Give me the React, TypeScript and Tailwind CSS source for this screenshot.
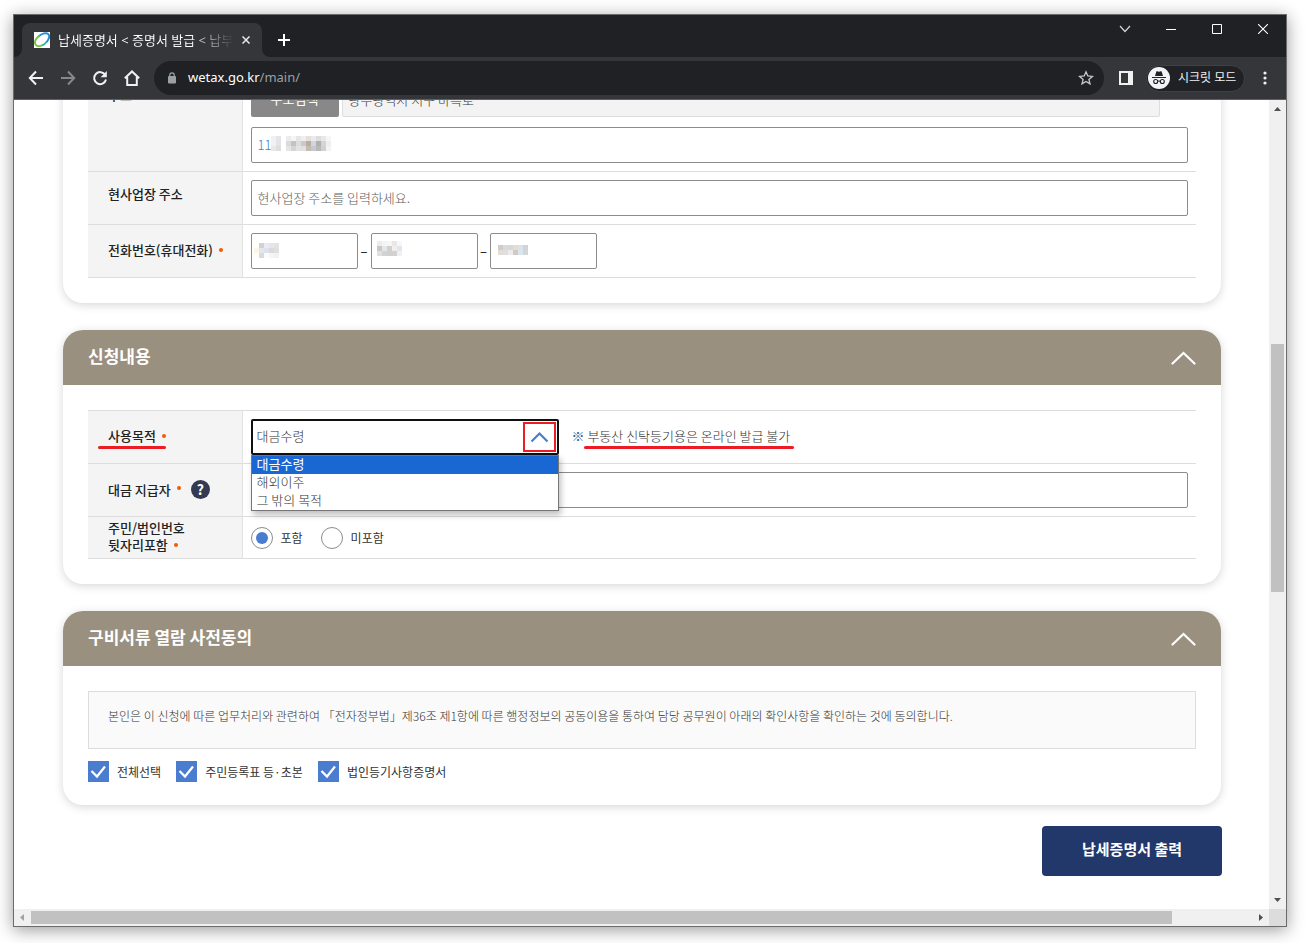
import React from "react";
import type { ReactNode } from "react";

const UI = "font-['Noto_Sans','Noto_Sans_CJK_KR',sans-serif]";

function Mosaic({ cells, className, cols }: { cells: string[]; cols: number; className: string }) {
  const rows = Math.ceil(cells.length / cols);
  return (
    <svg aria-hidden="true" className={className} width={cols * 5} height={rows * 5} shapeRendering="crispEdges">
      {cells.map((c, i) => (
        <rect key={i} x={(i % cols) * 5} y={Math.floor(i / cols) * 5} width="5" height="5" fill={c} />
      ))}
    </svg>
  );
}

function IconButton({ label, children, className = "" }: { label: string; children: ReactNode; className?: string }) {
  return (
    <button type="button" aria-label={label} className={"flex shrink-0 items-center justify-center " + className}>
      {children}
    </button>
  );
}

function TabStrip() {
  return (
    <div className="flex h-[42px] items-end justify-between bg-[#202124] pl-2">
      <div className="flex items-end">
        <div className="relative flex h-[34px] w-[240px] items-center rounded-t-lg bg-[#35363a] pl-3 pr-2">
          <svg className="absolute -left-2 bottom-0" width="8" height="8" aria-hidden="true">
            <path d="M8 0v8H0a8 8 0 0 0 8-8z" fill="#35363a" />
          </svg>
          <svg className="absolute -right-2 bottom-0" width="8" height="8" aria-hidden="true">
            <path d="M0 0v8h8a8 8 0 0 1-8-8z" fill="#35363a" />
          </svg>
          <svg width="16" height="16" viewBox="0 0 16 16" className="shrink-0" fill="none" aria-hidden="true">
            <rect width="16" height="16" fill="#fff" />
            <path d="M4.500 4.500C8 1.200 12.500.4 14.300 2.200c1.600 1.700.6 5.200-2 8.300" stroke="#1f8fd6" strokeWidth="1.900" />
            <path d="M5.500 3.500C2.500 6 .4 9.800 1.300 12.200c.9 2.300 4.200 2.500 7.700.6" stroke="#7cc043" strokeWidth="1.900" />
            <path d="M8.500 13.200c1.600-.8 3-2 4-3.300" stroke="#2fae9b" strokeWidth="1.600" />
          </svg>
          <div className="ml-2 h-5 flex-1 overflow-hidden bg-gradient-to-r from-white from-75% to-transparent bg-clip-text text-[13px] leading-5 whitespace-nowrap text-transparent">
            납세증명서 &lt; 증명서 발급 &lt; 납부
          </div>
          <IconButton label="탭 닫기" className="ml-1 size-4">
            <svg width="8" height="8" viewBox="0 0 8 8" stroke="#e8eaed" strokeWidth="1.500">
              <path d="M.5.5l7 7M7.500.5l-7 7" />
            </svg>
          </IconButton>
        </div>
        <IconButton label="새 탭" className="ml-2 h-[34px] w-7">
          <svg width="12" height="12" viewBox="0 0 12 12" stroke="#fff" strokeWidth="2">
            <path d="M6 0v12M0 6h12" />
          </svg>
        </IconButton>
      </div>
      <div className="flex h-full items-start">
        <IconButton label="탭 검색" className="h-7 w-[46px]">
          <svg width="12" height="8" viewBox="0 0 12 8" fill="none" stroke="#d5d5d6" strokeWidth="1.200">
            <path d="M1 1l5 5.500L11 1" />
          </svg>
        </IconButton>
        <IconButton label="최소화" className="h-7 w-[46px]">
          <svg width="10" height="2"><path d="M0 1.500h10" stroke="#fff" /></svg>
        </IconButton>
        <IconButton label="최대화" className="h-7 w-[46px]">
          <svg width="10" height="10" fill="none" stroke="#fff"><path d="M.5.500h9v9h-9z" /></svg>
        </IconButton>
        <IconButton label="닫기" className="h-7 w-[46px]">
          <svg width="10" height="10" stroke="#fff" strokeWidth="1.100"><path d="M0 0l10 10M10 0L0 10" /></svg>
        </IconButton>
      </div>
    </div>
  );
}

function Toolbar() {
  return (
    <div className="flex h-[43px] items-center border-b border-[#5f6063] bg-[#35363a] pl-3.5 pr-[13px]">
      <div className="flex items-center gap-4">
        <IconButton label="뒤로" className="size-4">
          <svg width="16" height="16" viewBox="0 0 16 16" fill="none" stroke="#f1f1f2" strokeWidth="2">
            <path d="M15 8H2M8 1.500L1.800 8 8 14.500" />
          </svg>
        </IconButton>
        <IconButton label="앞으로" className="size-4">
          <svg width="16" height="16" viewBox="0 0 16 16" fill="none" stroke="#87888b" strokeWidth="2">
            <path d="M1 8h13M8 1.500L14.200 8 8 14.500" />
          </svg>
        </IconButton>
        <IconButton label="새로고침" className="size-4">
          <svg width="16" height="16" viewBox="0 0 16 16" fill="none" stroke="#f1f1f2" strokeWidth="2">
            <path d="M13.300 5A6 6 0 1 0 14 9.500" />
            <path d="M14.800 1v6.200H8.600z" fill="#f1f1f2" stroke="none" />
          </svg>
        </IconButton>
        <IconButton label="홈" className="size-4">
          <svg width="16" height="16" viewBox="0 0 16 16" fill="none" stroke="#f1f1f2" strokeWidth="2">
            <path d="M.8 8.300L8 1.500l7.200 6.800M3.200 7v8h9.600V7" />
          </svg>
        </IconButton>
      </div>
      <div className="ml-3.5 flex h-[34px] min-w-0 flex-1 items-center rounded-full bg-[#202124] pl-[13px] pr-2.5">
        <svg width="10" height="12" viewBox="0 0 10 12" className="shrink-0" aria-hidden="true">
          <rect x="1" y="4" width="8" height="7.500" rx="1" fill="#9aa0a6" />
          <path d="M2.800 4.500V3a2.200 2.200 0 0 1 4.400 0v1.500" fill="none" stroke="#9aa0a6" strokeWidth="1.200" />
        </svg>
        <a href="#main" className="ml-[11px] flex-1 text-[13px] text-[#9aa0a6]">
          <span className="text-white">wetax.go.kr</span>/main/
        </a>
        <IconButton label="북마크" className="size-4">
          <svg width="16" height="16" viewBox="0 0 16 16" fill="none" stroke="#c8c9cb" strokeWidth="1.300">
            <path d="M8 1.800l1.800 4.200 4.600.4-3.500 3 1.100 4.500L8 11.500l-4 2.400 1.100-4.500-3.500-3 4.600-.4z" />
          </svg>
        </IconButton>
      </div>
      <IconButton label="사이드 패널" className="ml-3.5 size-4">
        <svg width="14" height="14" viewBox="0 0 14 14">
          <path d="M0 0h14v14H0zM2 2v10h7V2z" fill="#f1f1f2" fillRule="evenodd" />
        </svg>
      </IconButton>
      <button type="button" className="ml-3 flex h-[27px] w-[99px] shrink-0 items-center rounded-full border border-[#404144] bg-[#202124] pl-px text-xs text-[#f1f1f2]">
        <svg width="22" height="22" viewBox="0 0 22 22" aria-hidden="true">
          <circle cx="11" cy="11" r="11" fill="#f1f3f4" />
          <path d="M7 9l1.300-4.300c.2-.4.500-.5.900-.4l1.800.5 1.800-.5c.4-.1.700 0 .9.400L15 9zM4 10h14v1H4z" fill="#202124" />
          <g fill="none" stroke="#202124" strokeWidth="1.100">
            <circle cx="7.700" cy="14.500" r="2" />
            <circle cx="14.300" cy="14.500" r="2" />
            <path d="M9.700 14.300q1.300-.7 2.600 0" />
          </g>
        </svg>
        <span className="ml-2">시크릿 모드</span>
      </button>
      <IconButton label="메뉴" className="ml-3 size-4">
        <svg width="4" height="14" fill="#f1f1f2">
          <circle cx="2" cy="2" r="1.600" /><circle cx="2" cy="7" r="1.600" /><circle cx="2" cy="12" r="1.600" />
        </svg>
      </IconButton>
    </div>
  );
}

function Dot() {
  return <span className="mb-0.5 ml-1.5 inline-block size-1 rounded-full bg-[#f25a05] align-middle" />;
}

function Row({
  label,
  children,
  className = "py-2",
  labelClass = "pb-1",
}: {
  label: ReactNode;
  children: ReactNode;
  className?: string;
  labelClass?: string;
}) {
  return (
    <tr className="border-b border-[#ddd]">
      <th scope="row" className={"w-[154px] border-r border-[#e2e2e2] bg-[#f4f4f4] pl-5 text-left text-[13px] leading-[17px] font-medium text-[#222] " + labelClass}>
        {label}
      </th>
      <td className={"px-2 " + className}>{children}</td>
    </tr>
  );
}

function SectionHeader({ title }: { title: string }) {
  return (
    <div className="flex h-[55px] items-center justify-between rounded-t-[20px] bg-[#9a907f] px-[25px]">
      <h2 className="pb-1 text-[17px] leading-[26px] font-bold text-white">{title}</h2>
      <button type="button" aria-label={title + " 접기"}>
        <svg width="25" height="14" viewBox="0 0 25 14" fill="none" stroke="#fff" strokeWidth="2.200" strokeLinecap="round">
          <path d="M1.500 12.500l11-10.500 11 10.500" />
        </svg>
      </button>
    </div>
  );
}

const CARD = "rounded-[20px] bg-white shadow-[0_2px_10px_rgba(0,0,0,0.16)]";
const FIELD = "block h-9 rounded-xs border border-[#8c8c8c] bg-white px-1.5 pb-0.5 text-[13px] font-light placeholder:text-[#5c5c5c]";

function Phone({ label, cells, cols, className }: { label: string; cells: string[]; cols: number; className: string }) {
  return (
    <span className="relative">
      <input aria-label={label} className={FIELD + " w-[107px]"} />
      <Mosaic className={"absolute " + className} cells={cells} cols={cols} />
    </span>
  );
}

function ApplicantCard() {
  return (
    <section className={CARD + " -mt-[27px] px-[25px] pb-[25px]"}>
      <table className="w-full border-collapse">
        <tbody>
          <Row label="주소" labelClass="pt-[13px] align-top">
            <div className="flex gap-[3px] pr-7">
              <button type="button" className="h-9 w-[88px] rounded-xs bg-[#888] text-[13px] text-white">주소검색</button>
              <input aria-label="주소" readOnly defaultValue="광주광역시 서구 마륵로" className="h-9 min-w-0 flex-1 rounded-xs border border-[#ddd] bg-[#f3f3f3] px-1.5 text-[13px] font-light text-[#333]" />
            </div>
            <div className="relative mt-2.5">
              <input aria-label="상세주소" defaultValue="11" className={FIELD + " w-full text-[#2f7fd0]"} />
              <Mosaic
                className="absolute left-5 top-[9px]"
                cols={12}
                cells={[
                  "#f0f0f2", "#e5e5e8", "#fff", "#ececec", "#f4f6f6", "#e6e6e6", "#efefef", "#e3e0de", "#e9ebf0", "#dedede", "#e9e9eb", "#f6f6f6",
                  "#f2f2f2", "#e2e4e9", "#fff", "#dadada", "#c2c2c2", "#dcdcdc", "#cac8ca", "#bcae9f", "#d3d4dc", "#b0b0b0", "#d4d4d6", "#eee",
                  "#e8e8e8", "#dedee0", "#fff", "#e5e5e5", "#d5d5d5", "#dfe3e8", "#e5dfdd", "#c3bab4", "#c5c8d0", "#b8b8b8", "#d0d0d0", "#f3f3f3",
                ]}
              />
            </div>
          </Row>
          <Row label={<label htmlFor="office">현사업장 주소</label>} labelClass="pb-2.5">
            <input id="office" placeholder="현사업장 주소를 입력하세요." className={FIELD + " w-full text-[#333]"} />
          </Row>
          <Row label={<>전화번호(휴대전화)<Dot /></>}>
            <div className="flex items-center text-[13px]">
              <Phone label="전화번호 앞자리" className="left-[3px] top-[10px]" cols={5}
                cells={["#fff", "#d4d2ce", "#e9ebf2", "#e6e6ea", "#e3e3e3", "#fff4e6", "#e2e6ee", "#e0e0ee", "#dcdad8", "#dfdfe0", "#fff", "#dadad8", "#fbfbfd", "#f5f5f5", "#f1f1f1"]} />
              <span className="w-[13px] text-center">–</span>
              <Phone label="전화번호 가운데 자리" className="left-1.5 top-2" cols={5}
                cells={["#f1ebe8", "#f2f4f6", "#f5f6f7", "#e9e8e4", "#f4f8fa", "#c9c8c6", "#e3e7e7", "#cfd0cf", "#f3eeec", "#e2e5ea", "#e0e0df", "#d2d3d1", "#cfd0cf", "#d0d1d0", "#eff0f3"]} />
              <span className="w-3 text-center">–</span>
              <Phone label="전화번호 뒷자리" className="left-2 top-3" cols={6}
                cells={["#cfccca", "#d9d9de", "#d6d8dc", "#e9dace", "#d9e2ea", "#d1d3d8", "#e2ddd6", "#dedede", "#ececee", "#d4c8c0", "#d9e6f0", "#d3d5d8"]} />
            </div>
          </Row>
        </tbody>
      </table>
    </section>
  );
}

function PurposeSelect() {
  return (
    <div className="relative w-[308px] shrink-0">
      <select id="purpose" defaultValue="대금수령" className="block h-9 w-full appearance-none rounded-xs border-2 border-[#101010] bg-white px-1 pb-0.5 text-[13px] font-light text-[#333]">
        <option>대금수령</option>
        <option>해외이주</option>
        <option>그 밖의 목적</option>
      </select>
      <span className="pointer-events-none absolute right-[3px] top-[3px] flex h-[30px] w-[33px] items-center justify-center border-2 border-[#ec1c24]">
        <svg width="19" height="12" viewBox="0 0 19 12" fill="none" stroke="#4a7dd0" strokeWidth="2.200">
          <path d="M1.500 10.500l8-8 8 8" />
        </svg>
      </span>
      <ul className="absolute top-9 left-0 z-10 h-14 w-full border border-[#767676] bg-white text-[13px] leading-4 font-light text-[#333] shadow-[2px_4px_6px_rgba(0,0,0,0.25)]">
        <li className="h-[18px] bg-[#1967d2] pl-[5px] font-normal text-white">대금수령</li>
        <li className="h-[18px] pl-[5px]">해외이주</li>
        <li className="h-[18px] pl-[5px]">그 밖의 목적</li>
      </ul>
    </div>
  );
}

function Radio({ label, checked }: { label: string; checked?: boolean }) {
  return (
    <label className="flex items-center gap-2">
      <input type="radio" name="suffix" defaultChecked={checked} className="size-[22px] appearance-none rounded-full border border-[#8c8c8c] bg-white bg-clip-content p-1 checked:bg-[#4a7dd0]" />
      {label}
    </label>
  );
}

function RequestCard() {
  return (
    <section className={CARD + " mt-[27px] pb-[25px]"}>
      <SectionHeader title="신청내용" />
      <div className="px-[25px] pt-[25px]">
        <table className="w-full border-collapse border-t border-[#ddd]">
          <tbody>
            <Row
              label={
                <span className="relative">
                  <label htmlFor="purpose">사용목적</label><Dot />
                  <span className="absolute top-5 -left-2.5 h-[3px] w-[68px] rounded-full bg-[#ec1c24]" />
                </span>
              }
            >
              <div className="flex items-center">
                <PurposeSelect />
                <p className="ml-[13px] pb-0.5 text-[13px] font-light text-[#333]">
                  <span className="text-[#3a5a80]">※</span>{" "}
                  <span className="relative">
                    부동산 신탁등기용은 온라인 발급 불가
                    <span className="absolute top-5 -left-[3px] h-[3px] w-[210px] rounded-full bg-[#ec1c24]" />
                  </span>
                </p>
              </div>
            </Row>
            <Row
              labelClass="pb-0.5"
              label={
                <span className="flex items-center">
                  <label htmlFor="payer">대금 지급자</label><Dot />
                  <button type="button" aria-label="도움말" className="ml-2.5 size-[19px] rounded-full bg-[#333a52] text-sm leading-[19px] font-bold text-white">?</button>
                </span>
              }
            >
              <input id="payer" className={FIELD + " w-full text-[#333]"} />
            </Row>
            <Row label={<>주민/법인번호<br />뒷자리포함<Dot /></>} className="py-0">
              <div className="flex h-[41px] items-center gap-[18px] text-xs text-[#333]">
                <Radio label="포함" checked />
                <Radio label="미포함" />
              </div>
            </Row>
          </tbody>
        </table>
      </div>
    </section>
  );
}

function Check({ label }: { label: string }) {
  return (
    <label className="flex items-center gap-2">
      <span className="relative size-[21px]">
        <input type="checkbox" defaultChecked className="block size-[21px] appearance-none bg-[#4a7dd0]" />
        <svg className="pointer-events-none absolute inset-0" width="21" height="21" fill="none" stroke="#fff" strokeWidth="2.200">
          <path d="M3.500 10l5.500 5.500L17 5.500" />
        </svg>
      </span>
      {label}
    </label>
  );
}

function ConsentCard() {
  return (
    <section className={CARD + " mt-[27px] pb-[23px]"}>
      <SectionHeader title="구비서류 열람 사전동의" />
      <div className="px-[25px] pt-[25px]">
        <p className="h-[58px] border border-[#ddd] bg-[#fafafa] px-[19px] py-3.5 text-xs leading-5 font-light text-[#333]">
          본인은 이 신청에 따른 업무처리와 관련하여 「전자정부법」제36조 제1항에 따른 행정정보의 공동이용을 통하여 담당 공무원이 아래의 확인사항을 확인하는 것에 동의합니다.
        </p>
        <div className="mt-3 flex items-center gap-[15px] text-xs leading-5 text-[#333]">
          <Check label="전체선택" />
          <Check label="주민등록표 등·초본" />
          <Check label="법인등기사항증명서" />
        </div>
      </div>
    </section>
  );
}

export default function App() {
  return (
    <div className={"flex h-screen bg-white pt-3.5 pr-[21px] pb-4 pl-[13px] " + UI}>
      <div className="flex min-w-0 flex-1 flex-col border border-[#6b6b6b] shadow-[0_3px_16px_rgba(0,0,0,0.4)]">
        <TabStrip />
        <Toolbar />
        <div className="flex min-h-0 flex-1">
          <main id="main" className="min-w-0 flex-1 overflow-hidden bg-white pr-12 pl-[49px] font-['Noto_Sans_CJK_KR',sans-serif]">
            <ApplicantCard />
            <RequestCard />
            <ConsentCard />
            <div className="mt-[21px] flex justify-end">
              <button type="button" className="-mr-px h-[50px] w-[180px] rounded-sm bg-[#22386b] pb-1 text-[15px] font-bold text-white">납세증명서 출력</button>
            </div>
          </main>
          <div aria-hidden="true" className="flex w-[17px] flex-col items-center bg-[#f0f0f0] py-[7px]">
            <svg width="7" height="4"><path d="M0 4l3.500-4L7 4z" fill="#505050" /></svg>
            <div className="flex-[233]" />
            <div className="w-[13px] flex-[248] bg-[#c1c1c1]" />
            <div className="flex-[306]" />
            <svg width="7" height="4"><path d="M0 0l3.500 4L7 0z" fill="#505050" /></svg>
          </div>
        </div>
        <div aria-hidden="true" className="flex h-[17px] shrink-0 bg-[#f0f0f0]">
          <div className="flex flex-1 items-center px-1.5">
            <svg width="4" height="7"><path d="M4 0L0 3.500 4 7z" fill="#a3a3a3" /></svg>
            <div className="ml-[7px] h-[13px] flex-[1141] bg-[#c1c1c1]" />
            <div className="flex-[87]" />
            <svg width="4" height="7"><path d="M0 0l4 3.500L0 7z" fill="#505050" /></svg>
          </div>
          <div className="w-[17px] bg-[#dcdcdc]" />
        </div>
      </div>
    </div>
  );
}
